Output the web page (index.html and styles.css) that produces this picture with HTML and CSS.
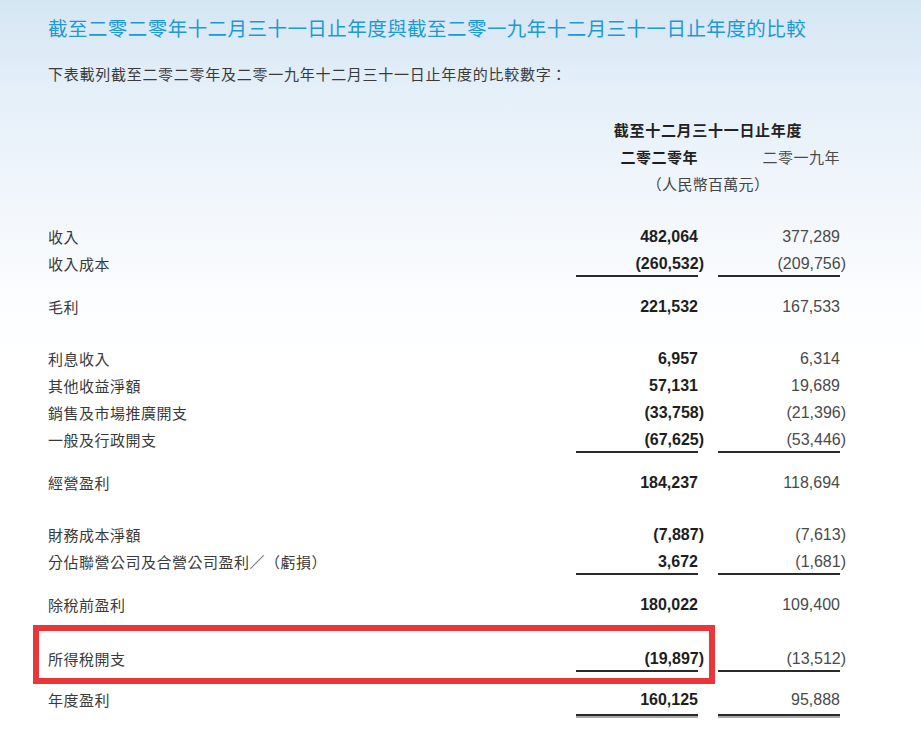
FILE: index.html
```html
<!DOCTYPE html>
<html lang="zh-Hant">
<head>
<meta charset="utf-8">
<title>比較</title>
<link rel="stylesheet" href="styles.css">
</head>
<body>
<div class="page">
  <h1 class="title">截至二零二零年十二月三十一日止年度與截至二零一九年十二月三十一日止年度的比較</h1>
  <p class="intro">下表載列截至二零二零年及二零一九年十二月三十一日止年度的比較數字：</p>

  <div class="head">
    <div class="head-span">截至十二月三十一日止年度</div>
    <div class="row head-years">
      <div class="label"></div>
      <div class="num cur">二零二零年</div>
      <div class="num prev">二零一九年</div>
    </div>
    <div class="head-span unit">（人民幣百萬元）</div>
  </div>

  <div class="table">
    <div class="row first">
      <div class="label">收入</div>
      <div class="num cur">482,064</div>
      <div class="num prev">377,289</div>
    </div>
    <div class="row rule">
      <div class="label">收入成本</div>
      <div class="num cur">(260,532<span class="p">)</span></div>
      <div class="num prev">(209,756<span class="p">)</span></div>
    </div>
    <div class="row gap-s">
      <div class="label">毛利</div>
      <div class="num cur">221,532</div>
      <div class="num prev">167,533</div>
    </div>

    <div class="row gap-l">
      <div class="label">利息收入</div>
      <div class="num cur">6,957</div>
      <div class="num prev">6,314</div>
    </div>
    <div class="row">
      <div class="label">其他收益淨額</div>
      <div class="num cur">57,131</div>
      <div class="num prev">19,689</div>
    </div>
    <div class="row">
      <div class="label">銷售及市場推廣開支</div>
      <div class="num cur">(33,758<span class="p">)</span></div>
      <div class="num prev">(21,396<span class="p">)</span></div>
    </div>
    <div class="row rule">
      <div class="label">一般及行政開支</div>
      <div class="num cur">(67,625<span class="p">)</span></div>
      <div class="num prev">(53,446<span class="p">)</span></div>
    </div>
    <div class="row gap-s">
      <div class="label">經營盈利</div>
      <div class="num cur">184,237</div>
      <div class="num prev">118,694</div>
    </div>

    <div class="row gap-l">
      <div class="label">財務成本淨額</div>
      <div class="num cur">(7,887<span class="p">)</span></div>
      <div class="num prev">(7,613<span class="p">)</span></div>
    </div>
    <div class="row rule">
      <div class="label">分佔聯營公司及合營公司盈利／（虧損）</div>
      <div class="num cur">3,672</div>
      <div class="num prev">(1,681<span class="p">)</span></div>
    </div>
    <div class="row gap-s">
      <div class="label">除稅前盈利</div>
      <div class="num cur">180,022</div>
      <div class="num prev">109,400</div>
    </div>

    <div class="row rule gap-x highlight-row">
      <div class="highlight"></div>
      <div class="label">所得稅開支</div>
      <div class="num cur">(19,897<span class="p">)</span></div>
      <div class="num prev">(13,512<span class="p">)</span></div>
    </div>
    <div class="row double gap-t">
      <div class="label">年度盈利</div>
      <div class="num cur">160,125</div>
      <div class="num prev">95,888</div>
    </div>

    <div class="row gap-b">
      <div class="label faint">以下各方應佔：</div>
      <div class="num cur"></div>
      <div class="num prev"></div>
    </div>
  </div>
</div>
</body>
</html>
```

FILE: styles.css
```css
html, body {
  margin: 0;
  padding: 0;
}

body {
  width: 921px;
  height: 737px;
  overflow: hidden;
  background: linear-gradient(180deg, #d5e6f3 0px, #e6f0f9 100px, #f4f8fc 230px, #fdfeff 320px, #ffffff 400px);
  font-family: "Noto Sans CJK TC", "Liberation Sans", sans-serif;
  color: #333;
}

.page {
  padding: 13px 0 0 48px;
}

.title {
  margin: 0;
  font-size: 19.5px;
  line-height: 30px;
  font-weight: 400;
  letter-spacing: 0.45px;
  color: #1b9ad5;
  white-space: nowrap;
}

.intro {
  margin: 17px 0 0;
  font-size: 15px;
  line-height: 27px;
  letter-spacing: 0.73px;
  color: #3a3a3a;
  white-space: nowrap;
}

.head {
  margin-top: 29px;
}

.head-span {
  width: 264px;
  margin-left: 528px;
  text-align: center;
  font-size: 15px;
  line-height: 27px;
  font-weight: 700;
  letter-spacing: 0.7px;
  color: #222;
  white-space: nowrap;
}

.head-span.unit {
  font-weight: 400;
  color: #444;
  letter-spacing: 0.3px;
}

.head-years .num {
  font-family: "Noto Sans CJK TC", sans-serif;
  font-size: 15px;
  letter-spacing: 0.5px;
}

.head-years .cur {
  font-weight: 700;
  color: #222;
}

.head-years .prev {
  color: #444;
}

.table {
  margin-top: 26px;
  display: flex;
  flex-direction: column;
}

.row {
  display: grid;
  grid-template-columns: 508px 122px 122px;
  column-gap: 20px;
  height: 27px;
  line-height: 27px;
}

.label {
  font-size: 15px;
  letter-spacing: 0.5px;
  color: #3a3a3a;
  white-space: nowrap;
}

.label.faint {
  color: #777;
}

.num {
  position: relative;
  text-align: right;
  font-family: "Liberation Sans", Arial, sans-serif;
  font-size: 16px;
  white-space: nowrap;
}

.num.cur {
  font-weight: 700;
  color: #1e1e1e;
}

.num.prev {
  font-weight: 400;
  color: #4a4a4a;
}

.p {
  margin-right: -6px;
}

.rule .num::after {
  content: "";
  position: absolute;
  left: 0;
  right: 0;
  bottom: 0;
  height: 2px;
  background: #2a2a2a;
}

.double .num::after {
  content: "";
  position: absolute;
  left: 0;
  right: 0;
  bottom: -3px;
  height: 2px;
  background: #2a2a2a;
  box-shadow: 0 2px 0 #a8a8a8;
}

.gap-s {
  margin-top: 16px;
}

.gap-l {
  margin-top: 25px;
}

.gap-x {
  margin-top: 27px;
}

.gap-t {
  margin-top: 14px;
}

.gap-b {
  margin-top: 21px;
}

.highlight-row {
  position: relative;
}

.highlight {
  position: absolute;
  left: -15px;
  top: -20px;
  width: 682px;
  height: 59px;
  box-sizing: border-box;
  border: 6px solid #ec3539;
}
```
